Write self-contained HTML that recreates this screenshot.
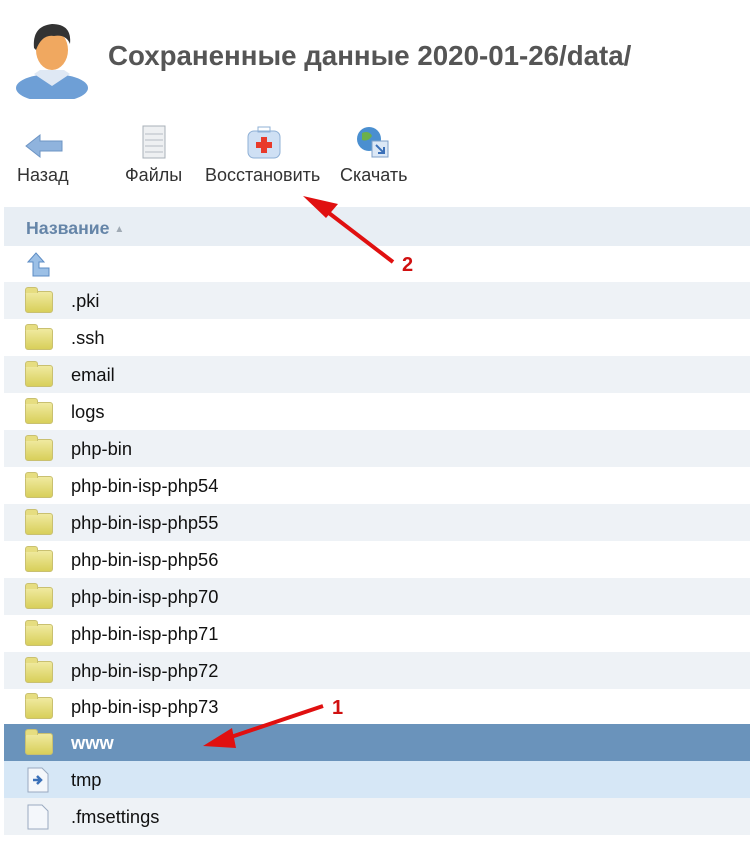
<!DOCTYPE html>
<html><head><meta charset="utf-8"><style>
body{margin:0;width:750px;height:855px;background:#fff;font-family:"Liberation Sans",Arial,sans-serif;position:relative;overflow:hidden}
.abs{position:absolute}
h1{position:absolute;left:108px;top:40px;margin:0;font-size:27.7px;font-weight:bold;color:#555}
.tb{position:absolute;top:165px;font-size:18px;color:#333}
.row{position:absolute;left:4px;width:746px;height:37px;font-size:18.3px;color:#111}
.row span{position:absolute;left:67px;top:8px}
.g{background:#eef2f6}
.fold{position:absolute;left:21px;top:9px;width:26px;height:20px;background:linear-gradient(#f0eaa0,#d8cf5a);border:1px solid #c9c070;border-radius:3px}
.fold:before{content:"";position:absolute;left:-1px;top:-5px;width:11px;height:5px;background:#e6dd80;border:1px solid #c9c070;border-bottom:none;border-radius:3px 3px 0 0}
</style></head><body>
<svg class="abs" style="left:14px;top:14px" width="80" height="85" viewBox="0 0 80 85">
<ellipse cx="38" cy="74" rx="36" ry="14" fill="#6e9fd6"/>
<path d="M20 60 L38 72 L56 60 L50 56 L26 56Z" fill="#dfe8f4"/>
<ellipse cx="38" cy="36" rx="16" ry="20" fill="#f0a860"/>
<path d="M20 34 Q18 12 38 10 Q58 10 56 30 Q52 20 40 22 Q28 20 22 36Z" fill="#333"/>
</svg>
<h1>Сохраненные данные 2020-01-26/data/</h1>
<svg class="abs" style="left:24px;top:132px" width="40" height="28"><path d="M2 14 L16 3 L16 9 L38 9 L38 19 L16 19 L16 25Z" fill="#8fb3dd" stroke="#6d94c4"/></svg>
<svg class="abs" style="left:137px;top:124px" width="34" height="38"><rect x="6" y="2" width="22" height="32" fill="#eef0f2" stroke="#a8b0b8"/><path d="M8 10h18M8 16h18M8 22h18M8 28h18" stroke="#b5bcc4"/></svg>
<svg class="abs" style="left:246px;top:124px" width="36" height="36"><rect x="2" y="7" width="32" height="27" rx="6" fill="#cfe0f4" stroke="#8fb0d6"/><rect x="12" y="3" width="12" height="5" fill="none" stroke="#8fb0d6"/><path d="M15 13h6v5h5v6h-5v5h-6v-5h-5v-6h5z" fill="#e83a2a"/></svg>
<svg class="abs" style="left:354px;top:124px" width="38" height="38"><circle cx="15" cy="15" r="12" fill="#4a8fd0"/><path d="M8 9 Q15 6 18 12 Q14 18 8 16Z" fill="#6cb04a"/><rect x="18" y="17" width="16" height="16" fill="#dce8f6" stroke="#7fa0c8"/><path d="M22 21 L30 29 M30 23 V29 H24" stroke="#3b70b8" stroke-width="2" fill="none"/></svg>
<div class="tb" style="left:17px">Назад</div>
<div class="tb" style="left:125px">Файлы</div>
<div class="tb" style="left:205px">Восстановить</div>
<div class="tb" style="left:340px">Скачать</div>
<div class="abs" style="left:4px;top:207px;width:746px;height:39px;background:#e8eef4"></div>
<div class="abs" style="left:26px;top:218px;font-size:17.7px;font-weight:bold;color:#6585a8">Название <span style="font-size:10px;color:#a0aab4;vertical-align:2px">▲</span></div>
<svg class="abs" style="left:24px;top:250px" width="28" height="28"><path d="M4 12 L12 3 L20 12 L15 12 L15 18 L25 18 L25 26 L9 26 L9 12Z" fill="#9cc0e6" stroke="#5d8cc4"/></svg>
<div class="row g" style="top:282px"><i class="fold"></i><span>.pki</span></div>
<div class="row" style="top:319px"><i class="fold"></i><span>.ssh</span></div>
<div class="row g" style="top:356px"><i class="fold"></i><span>email</span></div>
<div class="row" style="top:393px"><i class="fold"></i><span>logs</span></div>
<div class="row g" style="top:430px"><i class="fold"></i><span>php-bin</span></div>
<div class="row" style="top:467px"><i class="fold"></i><span>php-bin-isp-php54</span></div>
<div class="row g" style="top:504px"><i class="fold"></i><span>php-bin-isp-php55</span></div>
<div class="row" style="top:541px"><i class="fold"></i><span>php-bin-isp-php56</span></div>
<div class="row g" style="top:578px"><i class="fold"></i><span>php-bin-isp-php70</span></div>
<div class="row" style="top:615px"><i class="fold"></i><span>php-bin-isp-php71</span></div>
<div class="row g" style="top:652px"><i class="fold"></i><span>php-bin-isp-php72</span></div>
<div class="row" style="top:688px"><i class="fold"></i><span>php-bin-isp-php73</span></div>
<div class="row" style="top:724px;background:#6a93bb;color:#fff;font-weight:bold"><i class="fold"></i><span>www</span></div>
<div class="row" style="top:761px;background:#d6e7f6"><svg class="abs" style="left:22px;top:6px" width="24" height="26"><path d="M2 1h14l6 6v18H2z" fill="#f4f7fb" stroke="#9aaac0"/><path d="M7 13h7M11 9l4 4-4 4" stroke="#3b70b8" stroke-width="2.5" fill="none"/></svg><span>tmp</span></div>
<div class="row g" style="top:798px"><svg class="abs" style="left:22px;top:6px" width="24" height="26"><path d="M2 1h14l6 6v18H2z" fill="#f4f7fb" stroke="#9aaac0"/></svg><span>.fmsettings</span></div>
<svg class="abs" style="left:0;top:0" width="750" height="855">
<path d="M393 262 L325 210" stroke="#e01010" stroke-width="4"/><path d="M303 196 L338 204 L326 218Z" fill="#e01010"/>
<text x="402" y="271" font-family="Liberation Sans" font-weight="bold" font-size="20" fill="#d01010">2</text>
<path d="M323 706 L228 738" stroke="#e01010" stroke-width="4"/><path d="M203 746 L232 728 L236 748Z" fill="#e01010"/>
<text x="332" y="714" font-family="Liberation Sans" font-weight="bold" font-size="20" fill="#d01010">1</text>
</svg>
</body></html>
